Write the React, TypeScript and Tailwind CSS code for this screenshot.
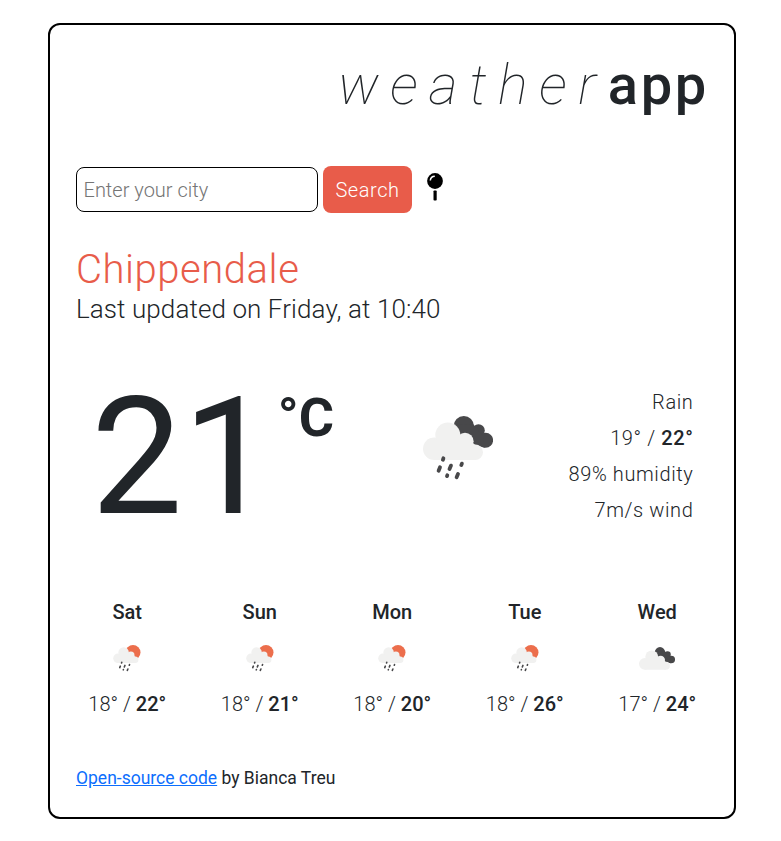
type Day = { name: string; low: number; high: number; icon: "sun-rain" | "clouds" };

const days: Day[] = [
  { name: "Sat", low: 18, high: 22, icon: "sun-rain" },
  { name: "Sun", low: 18, high: 21, icon: "sun-rain" },
  { name: "Mon", low: 18, high: 20, icon: "sun-rain" },
  { name: "Tue", low: 18, high: 26, icon: "sun-rain" },
  { name: "Wed", low: 17, high: 24, icon: "clouds" },
];

function DarkCloud() {
  return (
    <g fill="#48484a">
      <circle cx="40.800" cy="10.300" r="10.200" />
      <circle cx="55.500" cy="14.500" r="6.300" />
      <circle cx="62.600" cy="24.200" r="7.500" />
      <path d="M31 9L50 8L60 20L62 31.700L48 28L36 18Z" />
    </g>
  );
}

function LightCloud() {
  return (
    <g fill="#f1f1f0">
      <circle cx="11.300" cy="32.700" r="11.300" />
      <circle cx="24.800" cy="19" r="12.500" />
      <circle cx="42" cy="25.300" r="8.600" />
      <circle cx="52.300" cy="36.300" r="7.700" />
      <path d="M11.300 44V24L18 22H44L52.300 29V44Z" />
    </g>
  );
}

function Drops() {
  return (
    <path
      d="M20.400 42.300l-.5 1.500M17 51.300l-1.400 3.500M28 49.600l-1.500 3.500M38.900 47.600l-.6 1.500M24.300 59.300l-.3.800M35 58l-1.400 3.300"
      stroke="#48484a"
      strokeWidth="3.800"
      strokeLinecap="round"
    />
  );
}

function RainClouds() {
  return (
    <svg className="h-16 w-[70px]" viewBox="0 0 70 64">
      <DarkCloud />
      <LightCloud />
      <Drops />
    </svg>
  );
}

function SunRain() {
  return (
    <svg className="h-[27px] w-7" viewBox="0 0 28 27">
      <circle cx="20" cy="7.500" r="7.500" fill="#ec6e4c" />
      <g transform="translate(.2 -.4) scale(.42)">
        <LightCloud />
        <Drops />
      </g>
    </svg>
  );
}

function Clouds() {
  return (
    <svg className="h-[23px] w-9" viewBox="0 0 70 44.500">
      <DarkCloud />
      <LightCloud />
    </svg>
  );
}

function Pin() {
  return (
    <svg className="h-7 w-4" viewBox="0 0 16 28">
      <circle cx="8" cy="8" r="7.900" fill="#000" />
      <path d="M3.300 7.500A4.700 4.700 0 0 1 7.800 3.300" fill="none" stroke="#fff" strokeWidth="1.500" />
      <rect x="6.500" y="17.500" width="3.200" height="10" rx=".8" fill="#000" />
    </svg>
  );
}

export default function App() {
  return (
    <div className="min-h-[841px] bg-white pt-[23px] pl-12 font-['Roboto',sans-serif] text-[#212529]">
      <main className="h-[796px] w-[688px] rounded-xl border-2 border-black px-[26px]">
        <h1 className="-mr-px flex h-[120px] items-center justify-end text-[56px] leading-none">
          <span className="font-thin tracking-[11.500px] italic">weather</span>
          <span className="font-medium tracking-[2.700px]">app</span>
        </h1>

        <form className="mt-[21px] flex h-[47px] items-center">
          <input
            type="text"
            placeholder="Enter your city"
            className="h-[45px] w-[242px] rounded-lg border border-black px-[6.500px] text-xl font-light placeholder:text-[#757575]"
          />
          <button
            type="button"
            className="ml-[5px] h-[47px] w-[89px] rounded-lg bg-[#e85c4a] text-xl font-light tracking-[0.550px] text-white"
          >
            Search
          </button>
          <span className="ml-[14.500px] -mt-1.5">
            <Pin />
          </span>
        </form>

        <h2 className="mt-[33px] flex h-12 items-center text-[40px] leading-[48px] font-light tracking-[0.550px] text-[#e85c4a]">
          Chippendale
        </h2>
        <p className="-mt-px flex h-8 items-center text-[26px] leading-8 font-light tracking-[0.090px]">
          Last updated on Friday, at 10:40
        </p>

        <section className="mt-[50px] flex h-[163px]">
          <div className="flex w-[340px] items-start pl-[15px]">
            <span className="mt-px text-[163px] leading-[163px]">21</span>
            <span className="mt-[11px] ml-[3.500px] text-[54px] leading-[64px] font-bold">°C</span>
          </div>
          <div className="w-[80px] pt-[41px] pl-[7px]">
            <RainClouds />
          </div>
          <ul className="flex-1 pt-[9px] pr-[14.600px] text-right text-xl leading-9 font-light tracking-[0.600px]">
            <li>Rain</li>
            <li>
              19° / <span className="font-medium">22°</span>
            </li>
            <li>89% humidity</li>
            <li>7m/s wind</li>
          </ul>
        </section>

        <section className="mt-[59px] -ml-[15px] flex w-[662px] text-center text-xl">
          {days.map((d) => (
            <div key={d.name} className="flex w-[132.500px] shrink-0 flex-col items-center">
              <div className="h-[30px] leading-[30px] font-medium">{d.name}</div>
              <div className="mt-4 flex h-[30px] items-center justify-center">
                {d.icon === "clouds" ? <Clouds /> : <SunRain />}
              </div>
              <div className="mt-4 h-[30px] leading-[30px] font-light">
                {d.low}° / <span className="font-medium">{d.high}°</span>
              </div>
            </div>
          ))}
        </section>

        <footer className="mt-[46px] text-[17.500px] leading-[27px]">
          <a href="#" className="text-[#0d6efd] underline">
            Open-source code
          </a>{" "}
          by Bianca Treu
        </footer>
      </main>
    </div>
  );
}
